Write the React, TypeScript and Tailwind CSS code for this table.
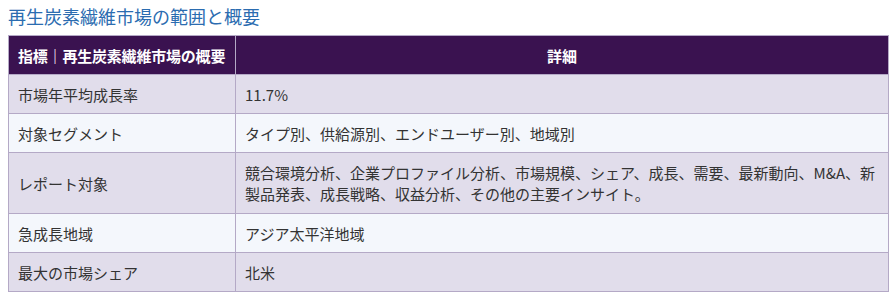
const rows: { label: string; value: React.ReactNode; tall?: boolean }[] = [
  { label: "市場年平均成長率", value: "11.7%" },
  { label: "対象セグメント", value: "タイプ別、供給源別、エンドユーザー別、地域別" },
  {
    label: "レポート対象",
    tall: true,
    value: (
      <>
        競合環境分析、企業プロファイル分析、市場規模、シェア、成長、需要、最新動向、M&amp;A、新
        <br />
        製品発表、成長戦略、収益分析、その他の主要インサイト。
      </>
    ),
  },
  { label: "急成長地域", value: "アジア太平洋地域" },
  { label: "最大の市場シェア", value: "北米" },
];

export default function App() {
  return (
    <div className="w-[894px] h-[304px] bg-white px-2 pt-[3px] font-['Noto_Sans_CJK_JP',sans-serif] text-[#333]">
      <h2 className="text-[18px] leading-[26px] text-[#2b6cb0] mb-[6px]">再生炭素繊維市場の範囲と概要</h2>
      <table className="w-[881px] table-fixed border-collapse text-[15px] leading-[21px]">
        <colgroup>
          <col className="w-[227px]" />
          <col />
        </colgroup>
        <thead>
          <tr className="bg-[#3a1250] text-white h-[39px]">
            <th className="pl-[9px] pr-0 text-left font-bold whitespace-nowrap border border-[#b4a9c6] tracking-[-0.2px]">
              指標｜再生炭素繊維市場の概要
            </th>
            <th className="px-[9px] text-center font-bold border border-[#b4a9c6]">詳細</th>
          </tr>
        </thead>
        <tbody>
          {rows.map((r, i) => (
            <tr
              key={i}
              className={`${i % 2 === 0 ? "bg-[#e1ddeb]" : "bg-[#f4f7fc]"} ${r.tall ? "h-[61px]" : "h-[39px]"}`}
            >
              <td className="px-[9px] py-[7px] border border-[#b4a9c6]">{r.label}</td>
              <td className="px-[9px] py-[7px] border border-[#b4a9c6]">{r.value}</td>
            </tr>
          ))}
        </tbody>
      </table>
    </div>
  );
}
